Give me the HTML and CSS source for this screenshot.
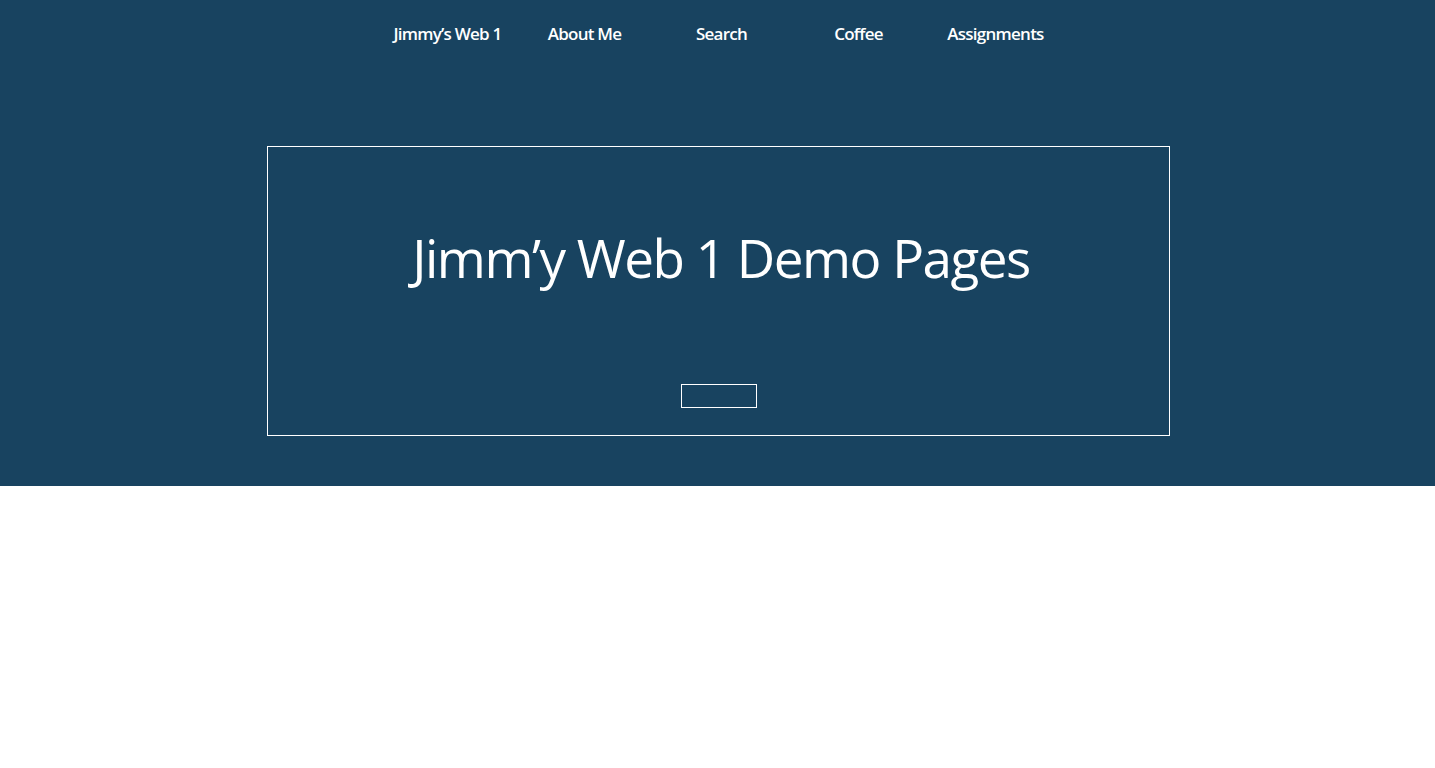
FILE: index.html
```html
<!DOCTYPE html>
<html lang="en">
<head>
<meta charset="utf-8">
<title>Jimmy's Web 1</title>
<link rel="stylesheet" href="styles.css">
</head>
<body>
<header class="hero">
  <nav class="nav">
    <a class="nav-link" href="#">Jimmy’s Web 1</a>
    <a class="nav-link" href="#">About Me</a>
    <a class="nav-link" href="#">Search</a>
    <a class="nav-link" href="#">Coffee</a>
    <a class="nav-link" href="#">Assignments</a>
  </nav>
  <section class="frame">
    <h1 class="title">Jimm’y Web 1 Demo Pages</h1>
    <a class="btn" href="#"></a>
  </section>
</header>
</body>
</html>
```
FILE: styles.css
```css
* { box-sizing: border-box; }
html, body { margin: 0; padding: 0; background: #fff; }
body { font-family: "Open Sans", "Liberation Sans", sans-serif; color: #fff; }
.hero {
  background: #184360;
  height: 486px;
  display: flex;
  flex-direction: column;
  align-items: center;
}
.nav {
  display: flex;
  height: 66px;
  align-items: center;
  padding-left: 8px;
}
.nav-link {
  width: 137px;
  text-align: center;
  color: #fff;
  text-decoration: none;
  font-size: 17px;
  font-weight: 600;
  letter-spacing: -0.75px;
}
.frame {
  margin-top: 80px;
  margin-left: 1px;
  width: 903px;
  height: 290px;
  border: 1px solid #fff;
  display: flex;
  flex-direction: column;
  align-items: center;
}
.title {
  margin: 76px 0 0;
  padding-left: 6px;
  font-weight: 400;
  font-size: 53px;
  line-height: 70px;
  letter-spacing: -1.5px;
}
.btn {
  display: block;
  margin-top: 91px;
  margin-left: 2px;
  width: 76px;
  height: 24px;
  border: 1px solid #fff;
}
```
